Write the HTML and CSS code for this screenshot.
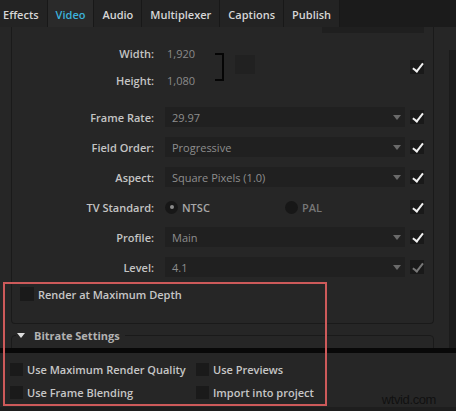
FILE: index.html
```html
<!DOCTYPE html>
<html lang="en">
<head>
    <meta charset="UTF-8">
    <title>Export Settings - Video</title>
    <link rel="stylesheet" href="styles.css">
</head>
<body>
    <div class="window">
        <div class="tabs">
            <div class="tab">Effects</div>
            <div class="tab active">Video</div>
            <div class="tab">Audio</div>
            <div class="tab">Multiplexer</div>
            <div class="tab">Captions</div>
            <div class="tab">Publish</div>
        </div>

        <div class="scroll-area">
            <div class="pane">
                <div class="box basic">
                    <div class="field-stub"></div>

                    <div class="dims">
                        <div class="label">Width:</div>
                        <div class="label">Height:</div>
                        <div class="link">
                            <div class="dim-values">
                                <span>1,920</span>
                                <span>1,080</span>
                            </div>
                            <div class="chain"></div>
                            <div class="chain-toggle"></div>
                        </div>
                        <div class="check on"></div>
                    </div>

                    <div class="row">
                        <div class="label">Frame Rate:</div>
                        <div class="select">29.97</div>
                        <div class="check on"></div>
                    </div>
                    <div class="row">
                        <div class="label">Field Order:</div>
                        <div class="select">Progressive</div>
                        <div class="check on"></div>
                    </div>
                    <div class="row">
                        <div class="label">Aspect:</div>
                        <div class="select">Square Pixels (1.0)</div>
                        <div class="check on"></div>
                    </div>
                    <div class="row">
                        <div class="label">TV Standard:</div>
                        <div class="radios">
                            <div class="radio on"><span class="dot"></span>NTSC</div>
                            <div class="radio"><span class="dot"></span>PAL</div>
                        </div>
                        <div class="check on"></div>
                    </div>
                    <div class="row">
                        <div class="label">Profile:</div>
                        <div class="select">Main</div>
                        <div class="check on"></div>
                    </div>
                    <div class="row">
                        <div class="label">Level:</div>
                        <div class="select">4.1</div>
                        <div class="check on dim"></div>
                    </div>

                    <div class="option render">
                        <span class="box-check"></span>Render at Maximum Depth
                    </div>
                </div>

                <div class="box group">
                    <div class="group-head"><span class="twisty"></span>Bitrate Settings</div>
                </div>
            </div>
            <div class="scrollbar"><div class="thumb"></div></div>
        </div>

        <div class="divider"></div>

        <div class="footer">
            <div class="option"><span class="box-check"></span>Use Maximum Render Quality</div>
            <div class="option"><span class="box-check"></span>Use Previews</div>
            <div class="option"><span class="box-check"></span>Use Frame Blending</div>
            <div class="option"><span class="box-check"></span>Import into project</div>
        </div>

        <div class="highlight"></div>
        <div class="watermark">wtvid.com</div>
    </div>
</body>
</html>
```

FILE: styles.css
```css
* {
    box-sizing: border-box;
}
body {
    margin: 0;
    background: #1d1d1d;
    font-family: "Open Sans", "DejaVu Sans", sans-serif;
    font-size: 11px;
    color: #c6c6c6;
}
.window {
    position: relative;
    width: 456px;
    height: 411px;
    overflow: hidden;
    background: #1e1e1e;
}

/* tab strip */
.tabs {
    display: flex;
    height: 27px;
    background: #1b1b1b;
}
.tab {
    display: flex;
    align-items: center;
    padding: 2px 8px 0;
    background: #232323;
    border-right: 1px solid #181818;
    color: #d6d6d6;
    font-size: 11px;
    font-weight: 600;
}
.tab:first-child {
    padding-left: 3px;
}
.tab.active {
    background: #2a2a2a;
    color: #3cb2dc;
}

/* scrolling settings pane */
.scroll-area {
    display: flex;
    height: 321px;
    overflow: hidden;
    background: #262626;
}
.pane {
    margin-left: 11px;
    width: 423px;
    flex-shrink: 0;
}
.box {
    border: 1px solid #1a1a1a;
}
.basic {
    height: 297px;
    border-top: none;
    border-radius: 0 0 4px 4px;
}
.field-stub {
    width: 102px;
    height: 6px;
    margin-left: 310px;
    background: #1f1f1f;
}
.scrollbar {
    flex: 1;
    display: flex;
    justify-content: flex-end;
}
.thumb {
    width: 7px;
    margin-top: 23px;
    background: #1b1b1b;
}

/* label / control / checkbox rows */
.row, .dims {
    display: grid;
    grid-template-columns: 142px 251px 19px;
    align-items: center;
}
.row {
    height: 30px;
}
.dims {
    grid-template-rows: 27px 27px;
    margin-top: 7px;
    margin-bottom: 8px;
}
.label {
    grid-column: 1;
    text-align: right;
    font-weight: 600;
    color: #c4c4c4;
}
.link {
    grid-column: 2;
    grid-row: 1 / 3;
    display: flex;
    align-items: center;
    margin-left: 11px;
}
.dims .check {
    grid-column: 3;
    grid-row: 1 / 3;
}
.dim-values {
    display: flex;
    flex-direction: column;
    width: 50px;
    padding-left: 2px;
    color: #8a8a8a;
}
.dim-values span {
    line-height: 27px;
}
.chain {
    width: 9px;
    height: 28px;
    border: 2px solid #050505;
    border-left: none;
}
.chain-toggle {
    width: 20px;
    height: 19px;
    margin: 0 0 5px 11px;
    background: #212121;
}
.select {
    position: relative;
    height: 20px;
    margin-left: 11px;
    padding-left: 7px;
    display: flex;
    align-items: center;
    background: #202020;
    color: #8e8e8e;
}
.select::after {
    content: "";
    position: absolute;
    right: 4px;
    top: 8px;
    border-left: 4px solid transparent;
    border-right: 4px solid transparent;
    border-top: 5px solid #6a6a6a;
}
.check {
    position: relative;
    justify-self: end;
    width: 14px;
    height: 14px;
    background: #191919;
}
.check.on::after {
    content: "";
    position: absolute;
    left: 5px;
    top: 1px;
    width: 4px;
    height: 9px;
    border-right: 2px solid #f0f0f0;
    border-bottom: 2px solid #f0f0f0;
    transform: rotate(38deg);
}
.check.dim::after {
    border-color: #777777;
}

/* radio buttons */
.radios {
    display: flex;
    margin-left: 11px;
}
.radio {
    display: flex;
    align-items: center;
    gap: 4px;
    font-weight: 600;
    color: #777777;
}
.radio.on {
    width: 120px;
    color: #a8a8a8;
}
.dot {
    display: flex;
    align-items: center;
    justify-content: center;
    width: 13px;
    height: 13px;
    border-radius: 50%;
    background: #171717;
}
.radio.on .dot::after {
    content: "";
    width: 4px;
    height: 4px;
    border-radius: 50%;
    background: #8c8c8c;
}

/* plain checkbox options */
.option {
    display: flex;
    align-items: center;
    gap: 4px;
    font-weight: 600;
    color: #c6c6c6;
}
.box-check {
    width: 13px;
    height: 13px;
    background: #1a1a1a;
}
.render {
    height: 24px;
    padding-left: 8px;
}
.render .box-check {
    width: 14px;
    height: 14px;
}

/* collapsible group */
.group {
    height: 40px;
    margin-top: 11px;
    border-radius: 4px 4px 0 0;
}
.group-head {
    display: flex;
    align-items: center;
    gap: 9px;
    width: max-content;
    height: 16px;
    margin: -9px 0 0 4px;
    padding: 0 5px 0 1px;
    background: #262626;
    font-weight: 700;
    color: #b2b2b2;
}
.twisty {
    border-left: 4px solid transparent;
    border-right: 4px solid transparent;
    border-top: 5px solid #dddddd;
}

.divider {
    height: 5px;
    background: #080808;
}

.footer {
    display: grid;
    grid-template-columns: 186px auto;
    grid-auto-rows: 23px;
    align-items: center;
    height: 54px;
    padding: 5px 0 0 10px;
    background: #262626;
}

/* annotation frame and site mark */
.highlight {
    position: absolute;
    left: 3px;
    top: 282px;
    width: 324px;
    height: 124px;
    border: 2px solid #cd5a5a;
    pointer-events: none;
}
.watermark {
    position: absolute;
    right: 20px;
    top: 392px;
    font-family: "Liberation Sans", sans-serif;
    font-size: 13px;
    letter-spacing: -0.4px;
    color: #111111;
}
```
